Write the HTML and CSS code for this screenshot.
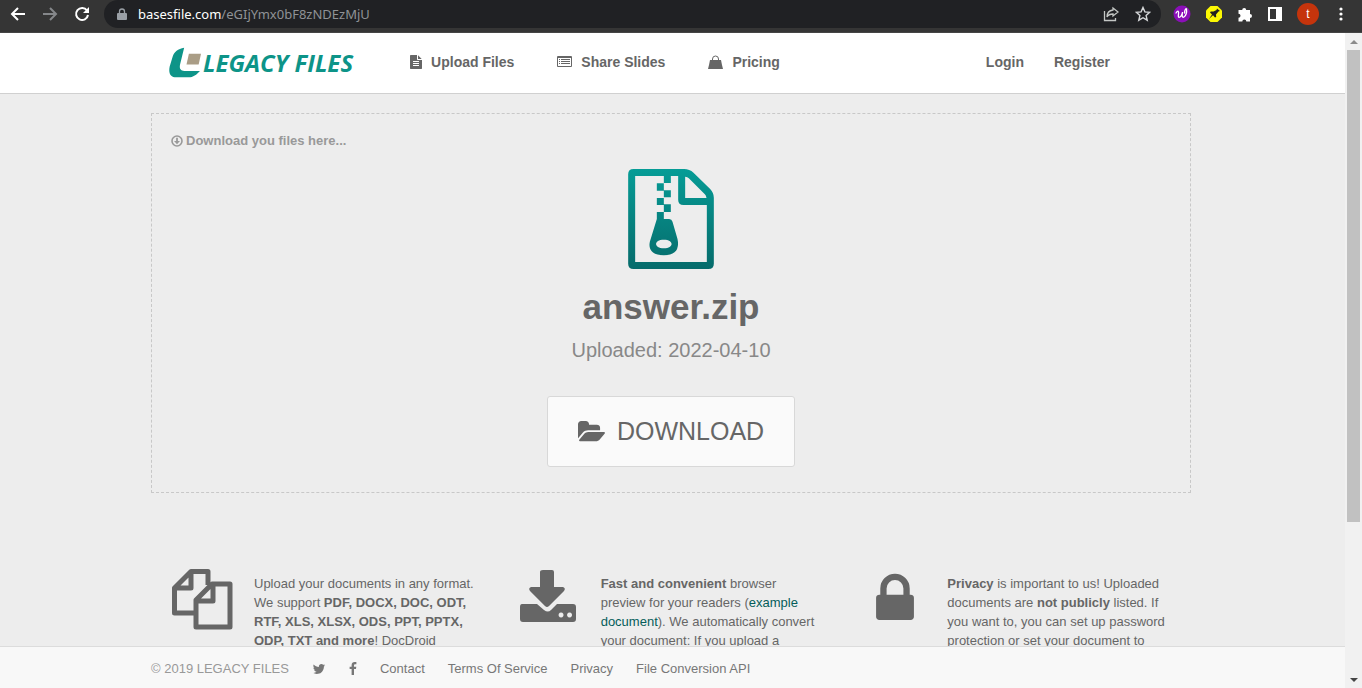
FILE: index.html
```
<!DOCTYPE html>
<html lang="en">

<head>
    <meta charset="utf-8">
    <title>answer.zip - Legacy Files</title>
    <meta name="viewport" content="width=device-width, initial-scale=1">
    <link rel="stylesheet" href="styles.css">
</head>

<body>
    <!-- Browser toolbar -->
    <div class="toolbar">
        <button class="tool" aria-label="Back">
            <svg width="16" height="16" viewBox="0 0 16 16" fill="none" stroke="#fff" stroke-width="2"><path d="M15 8H2M8 2L2 8l6 6"/></svg>
        </button>
        <button class="tool" aria-label="Forward">
            <svg width="16" height="16" viewBox="0 0 16 16" fill="none" stroke="#85878a" stroke-width="2"><path d="M1 8h13M8 2l6 6-6 6"/></svg>
        </button>
        <button class="tool" aria-label="Reload">
            <svg width="16" height="16" viewBox="0 0 16 16"><path d="M13 4.500A6 6 0 1 0 14 9" fill="none" stroke="#fff" stroke-width="2"/><path d="M15 1v6H9z" fill="#fff"/></svg>
        </button>
        <div class="address">
            <svg width="10" height="13" viewBox="0 0 10 13"><path d="M1 5h8a1 1 0 0 1 1 1v5a1 1 0 0 1-1 1H1a1 1 0 0 1-1-1V6a1 1 0 0 1 1-1z" fill="#9aa0a6"/><path d="M2.500 5.500V3.500a2.500 2.500 0 0 1 5 0v2" fill="none" stroke="#9aa0a6" stroke-width="1.300"/></svg>
            <span class="url"><span class="host">basesfile.com</span>/eGIjYmx0bF8zNDEzMjU</span>
            <button class="tool" aria-label="Share">
                <svg width="16" height="16" viewBox="0 0 16 16" fill="none" stroke="#c4c7c5" stroke-width="1.300"><path d="M1.500 5v9.500h11V12M10 2l5 4-5 4V8C7 8 5 9 4 11c0-4 2-6.500 6-7z"/></svg>
            </button>
            <button class="tool" aria-label="Bookmark">
                <svg width="16" height="16" viewBox="0 0 16 16" fill="none" stroke="#d5d7d9" stroke-width="1.400"><path d="M8 1.500l1.900 4.400 4.800.4-3.600 3.200 1.100 4.700L8 11.700l-4.200 2.500 1.100-4.700L1.300 6.300l4.800-.4z"/></svg>
            </button>
        </div>
        <div class="extensions">
            <button class="tool" aria-label="Wordtune">
                <svg width="18" height="18" viewBox="0 0 18 18"><circle cx="9" cy="9" r="8.500" fill="#8b0fb8"/><path d="M3 8c2-3 3-2 2.500 1s0 4 1.500 3 2.500-4 2.500-5c-.5 4-.5 6 1.500 5s3-5 2.500-8c-.5-1-2 1-2 4" fill="none" stroke="#fff" stroke-width="1.300" stroke-linecap="round"/></svg>
            </button>
            <button class="tool" aria-label="Pin">
                <svg width="18" height="18" viewBox="0 0 18 18"><path d="M5.500 1h7L17 5.500v7L12.500 17h-7L1 12.500v-7z" fill="#fcf803"/><path d="M12 3.500L15 6l-1.500.5-2.500 3 .2 2.500-1.200.5-2-2.200L4 14l3-4.500L5 7.500l.8-1H8.500L11.500 5z" fill="#222"/></svg>
            </button>
            <button class="tool" aria-label="Extensions">
                <svg width="16" height="16" viewBox="0 0 16 16"><path d="M1.500 4h3.700a2 2 0 1 1 4 0H13v4a2 2 0 1 1 0 4v3.500H9.300a2 2 0 0 0-4 0H1.500v-3.700a2 2 0 0 0 0-4z" fill="#fff"/></svg>
            </button>
            <button class="tool" aria-label="Side panel">
                <svg width="16" height="16" viewBox="0 0 16 16"><path d="M1 1h14v14H1zM3 3v10h6V3z" fill="#fff" fill-rule="evenodd"/></svg>
            </button>
            <button class="avatar" aria-label="Profile">t</button>
            <button class="tool" aria-label="Menu">
                <svg width="16" height="16" viewBox="0 0 16 16" fill="#fff"><circle cx="8" cy="3" r="1.600"/><circle cx="8" cy="8" r="1.600"/><circle cx="8" cy="13" r="1.600"/></svg>
            </button>
        </div>
    </div>

    <div class="window">
        <div class="page">
            <header class="header">
                <div class="container header-row">
                    <a class="logo" href="#">
                        <svg width="32" height="31" viewBox="60 40 95 92"><path d="M105 42C86 46 76 54 71 68L62 98C58 118 64 130 82 130h36c14 0 24-8 34-19h-42c-16 0-20-6-17-20z" fill="#0d9488"/><path d="M119 60h36l-7 32h-36z" fill="#aa9d86"/></svg>
                        <span>LEGACY FILES</span>
                    </a>
                    <nav class="nav">
                        <a href="#">
                            <svg width="12" height="14" viewBox="128 0 1536 1792"><path d="M1596 476q14 14 28 36h-472v-472q22 14 36 28zm-476 164h544v1056q0 40-28 68t-68 28h-1344q-40 0-68-28t-28-68v-1600q0-40 28-68t68-28h800v544q0 40 28 68t68 28zm160 736v-64q0-14-9-23t-23-9h-704q-14 0-23 9t-9 23v64q0 14 9 23t23 9h704q14 0 23-9t9-23zm0-256v-64q0-14-9-23t-23-9h-704q-14 0-23 9t-9 23v64q0 14 9 23t23 9h704q14 0 23-9t9-23zm0-256v-64q0-14-9-23t-23-9h-704q-14 0-23 9t-9 23v64q0 14 9 23t23 9h704q14 0 23-9t9-23z"/></svg>
                            Upload Files
                        </a>
                        <a href="#">
                            <svg width="15" height="14" viewBox="0 0 15 14"><path d="M1 1h13a1 1 0 0 1 1 1v9a1 1 0 0 1-1 1H1a1 1 0 0 1-1-1V2a1 1 0 0 1 1-1zM1 3v8h13V3zM2 4h1v1H2zM4 4h9v1H4zM2 6h1v1H2zM4 6h9v1H4zM2 8h1v1H2zM4 8h9v1H4z" fill-rule="evenodd"/></svg>
                            Share Slides
                        </a>
                        <a href="#">
                            <svg width="15" height="14" viewBox="0 0 15 14"><path d="M2 5h11l1 5H1zM1 10h13l1 4H0z"/><path d="M4.500 7V4a3 3 0 0 1 6 0v3" fill="none" stroke="#666" stroke-width="1"/></svg>
                            Pricing
                        </a>
                    </nav>
                    <div class="account">
                        <a href="#">Login</a>
                        <a href="#">Register</a>
                    </div>
                </div>
            </header>

            <main class="main">
                <section class="container drop">
                    <p class="hint">
                        <svg width="12" height="12" viewBox="0 0 12 12" fill="none" stroke="#999"><circle cx="6" cy="6" r="5" stroke-width="1.600"/><path d="M6 2.800v4" stroke-width="1.800"/><path d="M3 6h6L6 9.300z" fill="#999" stroke="none"/></svg>
                        Download you files here...
                    </p>
                    <div class="file">
                        <svg width="86" height="100" viewBox="58 27 257 300">
                            <defs>
                                <linearGradient id="teal" x1="0" y1="0" x2="0" y2="1">
                                    <stop offset="0" stop-color="#069c96"/>
                                    <stop offset="1" stop-color="#066b6b"/>
                                </linearGradient>
                            </defs>
                            <path fill="url(#teal)" fill-rule="evenodd" d="M74 27H226Q242 27 254 38L304 87Q315 99 315 113V311Q315 327 299 327H74Q58 327 58 311V43Q58 27 74 27ZM79 48V306H294V135H224Q208 135 208 119V48H186V69H165V48ZM229 50V114H293Q292 107 288 103L240 55Q236 51 229 50ZM144 70H165V91H186V112H165V133H186V156H165V177H181Q189 177 191 185L206 237Q216 285 165 286Q115 285 123 245L144 177V156H165V135H144V114H165V92H144ZM165 239C134 239 134 265 165 265S196 239 165 239Z"/>
                        </svg>
                        <h1>answer.zip</h1>
                        <p class="date">Uploaded: 2022-04-10</p>
                        <button class="download">
                            <svg width="27" height="26" viewBox="0 0 1879 1792"><path d="M1879 952q0 31-31 66l-336 396q-43 51-120.500 86.500t-143.500 35.500h-1088q-34 0-60.500-13t-26.500-43q0-31 31-66l336-396q43-51 120.500-86.500t143.500-35.500h1088q34 0 60.500 13t26.500 43zm-343-344v160h-832q-94 0-197 47.500t-164 119.500l-337 396-5 6q0-4-.5-12.500t-.5-12.500v-960q0-92 66-158t158-66h320q92 0 158 66t66 158v32h544q92 0 158 66t66 158z"/></svg>
                            DOWNLOAD
                        </button>
                    </div>
                </section>

                <section class="container features">
                    <div class="feature">
                        <svg width="62" height="62" viewBox="0 0 62 62" fill="none" stroke="#666" stroke-width="5" stroke-linejoin="round"><path d="M23 45H3.500V20L20 3.500h17V17M20 3.500V20H3.500"/><path d="M41 16h18v43H25V32zM42 16v17H25"/></svg>
                        <p>Upload your documents in any format. We support <b>PDF, DOCX, DOC, ODT, RTF, XLS, XLSX, ODS, PPT, PPTX, ODP, TXT and more</b>! DocDroid</p>
                    </div>
                    <div class="feature">
                        <svg width="62" height="62" viewBox="0 0 62 62"><path d="M25 2h9q2 0 2 2v15h9q3 1 1 4L31 38q-2 2-4 0L12 23q-2-3 1-4h9V4q0-2 3-2z"/><path fill-rule="evenodd" d="M4 36h15l7 6q4 3 7 0l6-6h16q3 0 3 3v12q0 3-3 3H5q-3 0-3-3V39q0-3 2-3zM43 44.500a2.500 2.500 0 1 0 .1 0zM51.500 44.500a2.500 2.500 0 1 0 .1 0z"/></svg>
                        <p><b>Fast and convenient</b> browser preview for your readers (<a href="#">example document</a>). We automatically convert your document: If you upload a</p>
                    </div>
                    <div class="feature">
                        <svg width="62" height="66" viewBox="-48 -30 1888 1980"><path d="M640 768h512v-192q0-106-75-181t-181-75-181 75-75 181v192zm832 96v576q0 40-28 68t-68 28h-960q-40 0-68-28t-28-68v-576q0-40 28-68t68-28h32v-192q0-184 132-316t316-132 316 132 132 316v192h32q40 0 68 28t28 68z"/></svg>
                        <p><b>Privacy</b> is important to us! Uploaded documents are <b>not publicly</b> listed. If you want to, you can set up password protection or set your document to</p>
                    </div>
                </section>
            </main>

            <footer class="footer">
                <div class="container footer-row">
                    <span class="copyright">© 2019 LEGACY FILES</span>
                    <a href="#" aria-label="Twitter"><svg width="14" height="14" viewBox="0 0 1792 1792"><path d="M1684 408q-67 98-162 167 1 14 1 42 0 130-38 259.500t-115.500 248.500-184.500 210.500-258 146-323 54.500q-271 0-496-145 35 4 78 4 225 0 401-138-105-2-188-64.500t-114-159.500q33 5 61 5 43 0 85-11-112-23-185.500-111.500t-73.500-205.500v-4q68 38 146 41-66-44-105-115t-39-154q0-88 44-163 121 149 294.500 238.500t371.500 99.500q-8-38-8-74 0-134 94.500-228.500t228.500-94.500q140 0 236 102 109-21 205-78-37 115-142 178 93-10 186-50z"/></svg></a>
                    <a href="#" aria-label="Facebook"><svg width="8" height="14" viewBox="400 0 1024 1792"><path d="M1343 12v264h-157q-86 0-116 36t-30 108v189h293l-39 296h-254v759h-306v-759h-255v-296h255v-218q0-186 104-288.500t277-102.500q147 0 228 12z"/></svg></a>
                    <a href="#">Contact</a>
                    <a href="#">Terms Of Service</a>
                    <a href="#">Privacy</a>
                    <a href="#">File Conversion API</a>
                </div>
            </footer>
        </div>

        <div class="scrollbar">
            <svg width="17" height="17" viewBox="0 0 17 17"><path d="M5 11l4-4 4 4z" fill="#8b8b8b"/></svg>
            <div class="track"><div class="thumb"></div></div>
            <svg width="17" height="17" viewBox="0 0 17 17"><path d="M5 7l4 4 4-4z" fill="#444"/></svg>
        </div>
    </div>
</body>

</html>
```
FILE: styles.css
```
* {
    box-sizing: border-box;
}

body {
    display: flex;
    flex-direction: column;
    height: 100vh;
    margin: 0;
    overflow: hidden;
    background-color: #ededed;
    color: #666;
    font-family: "Liberation Sans", Arial, sans-serif;
    font-size: 13px;
    line-height: 19px;
}

h1,
p {
    margin: 0;
}

a {
    color: inherit;
    text-decoration: none;
}

button {
    padding: 0;
    border: 0;
    background: none;
    color: inherit;
    font-family: inherit;
    cursor: pointer;
}

svg {
    display: block;
    flex: none;
}

svg:not([fill]) {
    fill: #666;
}

/* Browser toolbar */
.toolbar {
    display: flex;
    align-items: center;
    gap: 16px;
    height: 33px;
    padding: 0 13px 4px 10px;
    border-bottom: 1px solid #454545;
    background-color: #353535;
}

.address {
    display: flex;
    flex: 1;
    align-items: center;
    gap: 16px;
    height: 28px;
    margin-left: -2px;
    padding: 0 10px 0 13px;
    border-radius: 14px;
    background-color: #202124;
}

.url {
    flex: 1;
    margin-left: -5px;
    color: #8f9296;
    font-family: "Noto Sans", sans-serif;
    font-size: 13px;
}

.host {
    color: #fff;
}

.extensions {
    display: flex;
    align-items: center;
    gap: 14px;
    margin-left: -4px;
}

.avatar {
    width: 22px;
    height: 22px;
    border-radius: 50%;
    background-color: #c5340c;
    color: #fff;
    font-size: 12px;
}

/* Page */
.window {
    display: flex;
    flex: 1;
    min-height: 0;
}

.page {
    display: flex;
    flex: 1;
    flex-direction: column;
    min-width: 0;
}

.container {
    width: 100%;
    max-width: 1040px;
    margin: 0 auto;
}

.header,
.main,
.footer {
    padding-right: 3px;
}

.header {
    border-bottom: 1px solid #d0d0d0;
    background-color: #fff;
}

.header-row {
    display: flex;
    align-items: center;
    height: 60px;
    padding: 0 81px 2px 18px;
    font-size: 14px;
    font-weight: bold;
}

.logo {
    display: flex;
    align-items: center;
    gap: 2px;
    color: #0d9488;
    font-family: "Open Sans", sans-serif;
    font-size: 24px;
    font-style: italic;
    white-space: nowrap;
}

.nav {
    display: flex;
    gap: 43px;
    margin-left: 57px;
}

.nav a {
    display: flex;
    align-items: center;
    gap: 9px;
}

.account {
    display: flex;
    gap: 30px;
    margin-left: auto;
}

.main {
    flex: 1;
    min-height: 0;
    padding-top: 19px;
    overflow: hidden;
}

.drop {
    height: 380px;
    padding: 17px 19px;
    border: 1px dashed #c8c8c8;
}

.hint {
    display: flex;
    align-items: center;
    gap: 3px;
    color: #999;
    font-weight: bold;
}

.file {
    display: flex;
    flex-direction: column;
    align-items: center;
    padding-top: 19px;
}

h1 {
    margin-top: 18px;
    font-size: 35px;
    line-height: 40px;
}

.date {
    margin-top: 11px;
    color: #888;
    font-size: 20px;
    line-height: 24px;
}

.download {
    display: flex;
    align-items: center;
    gap: 12px;
    height: 71px;
    margin-top: 34px;
    padding: 0 30px;
    border: 1px solid #d8d8d8;
    border-radius: 3px;
    background-color: #fafafa;
    font-size: 25px;
}

.features {
    display: grid;
    grid-template-columns: repeat(3, 1fr);
    padding-top: 75px;
}

.feature {
    display: flex;
    gap: 21px;
    padding: 0 23px 0 20px;
}

.feature p {
    padding-top: 6px;
}

.feature a {
    color: #045d5a;
}

.footer {
    border-top: 1px solid #dcdcdc;
    background-color: #f8f8f8;
}

.footer-row {
    display: flex;
    align-items: center;
    gap: 23px;
    height: 41px;
    padding-top: 2px;
}

.footer svg {
    fill: #777;
}

.footer a {
    color: #777;
}

.copyright {
    color: #999;
}

/* Scrollbar */
.scrollbar {
    display: flex;
    flex-direction: column;
    width: 17px;
    background-color: #f1f1f1;
}

.track {
    flex: 1;
    padding: 0 2px;
}

.thumb {
    height: 76%;
    background-color: #c1c1c1;
}
```
